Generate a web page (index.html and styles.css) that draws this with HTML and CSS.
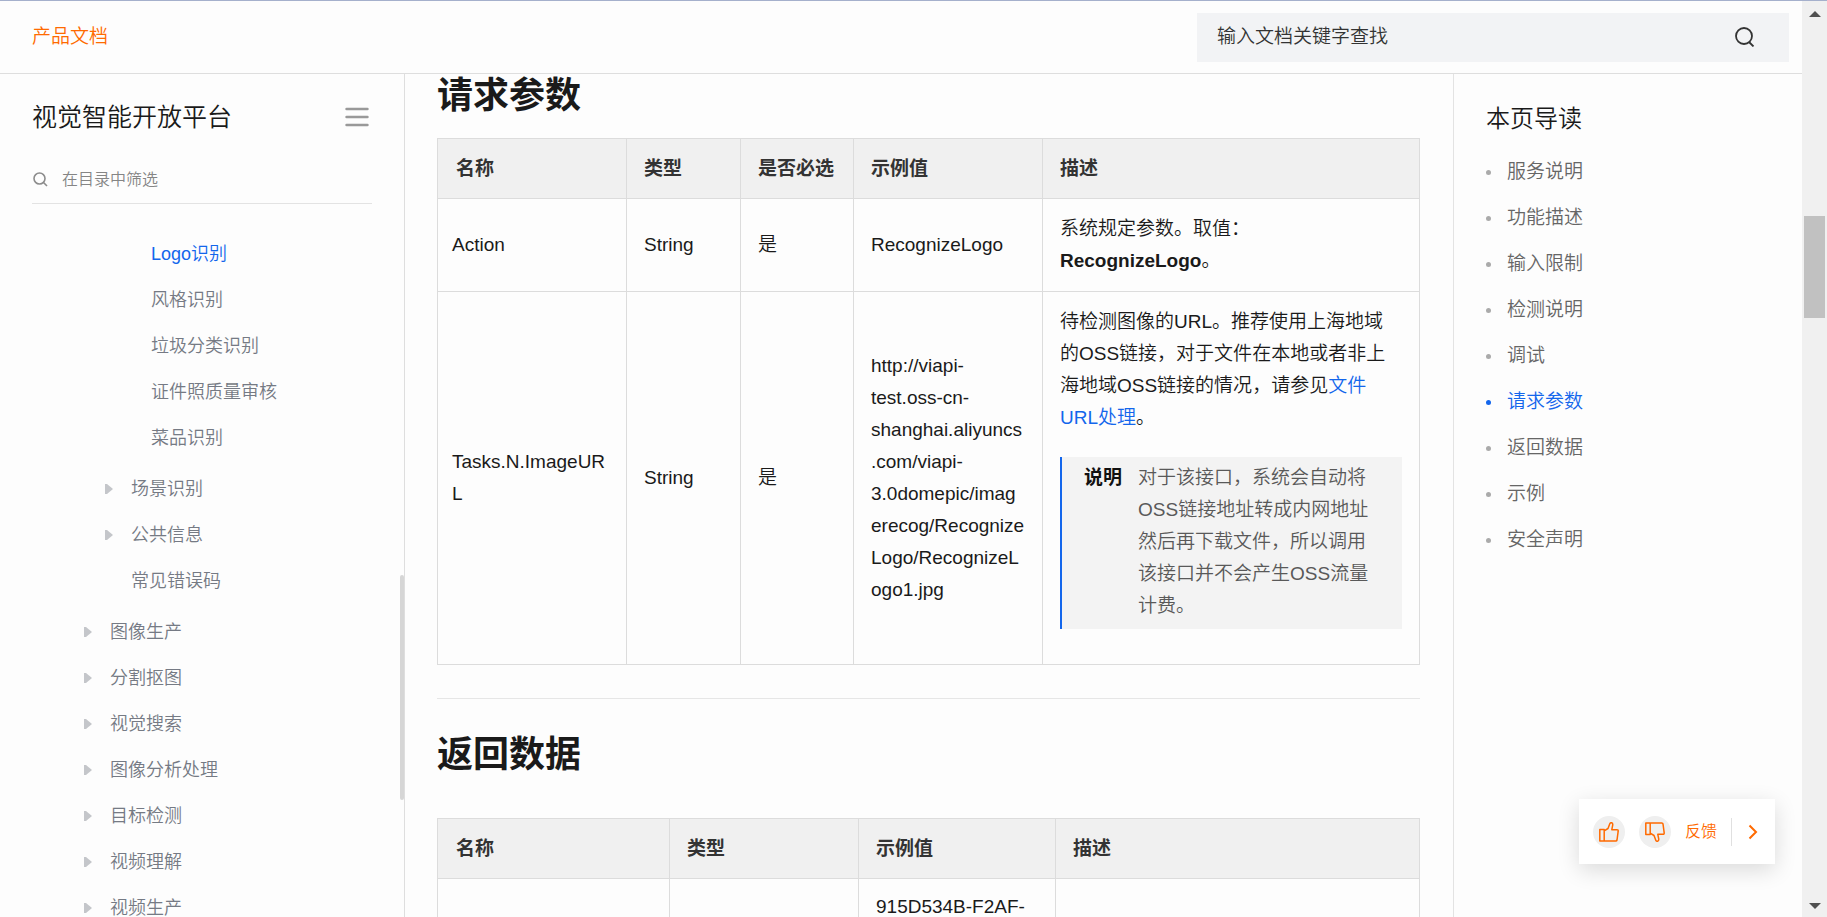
FILE: index.html
```html
<!DOCTYPE html>
<html lang="zh-CN">
<head>
<meta charset="utf-8">
<title>Logo识别 - 视觉智能开放平台</title>
<link rel="stylesheet" href="styles.css">
</head>
<body>
<div class="window">
  <div class="page">
    <header class="topbar">
      <a class="brand" href="#">产品文档</a>
      <form class="doc-search">
        <input class="doc-search-input" type="search" placeholder="输入文档关键字查找" aria-label="输入文档关键字查找">
        <button class="icon-button" type="button" aria-label="搜索">
          <svg width="20" height="20" viewBox="0 0 20 20" fill="none" stroke="#333" stroke-width="1.800"><circle cx="9" cy="9" r="8"/><path d="M14 15l4.500 4.500"/></svg>
        </button>
      </form>
    </header>
    <div class="columns">
      <aside class="sidebar">
        <div class="sidebar-head">
          <h2 class="sidebar-title">视觉智能开放平台</h2>
          <button class="icon-button" type="button" aria-label="收起目录">
            <svg width="24" height="20" viewBox="0 0 24 20" stroke="#999" stroke-width="2.400" stroke-linecap="round"><path d="M1.500 2h21M1.500 10h21M1.500 18h21"/></svg>
          </button>
        </div>
        <label class="filter">
          <svg width="15" height="15" viewBox="0 0 15 15" fill="none" stroke="#8c8c8c" stroke-width="1.6"><circle cx="6.500" cy="6.500" r="5.500"/><path d="M10.500 10.500l3.500 3.500"/></svg>
          <input class="filter-input" type="text" placeholder="在目录中筛选">
        </label>
        <nav class="tree">
          <ul class="tree-group level-3">
            <li><a class="active" href="#">Logo识别</a></li>
            <li><a href="#">风格识别</a></li>
            <li><a href="#">垃圾分类识别</a></li>
            <li><a href="#">证件照质量审核</a></li>
            <li><a href="#">菜品识别</a></li>
          </ul>
          <ul class="tree-group level-2">
            <li class="branch"><a href="#">场景识别</a></li>
            <li class="branch"><a href="#">公共信息</a></li>
            <li><a href="#">常见错误码</a></li>
          </ul>
          <ul class="tree-group level-1">
            <li class="branch"><a href="#">图像生产</a></li>
            <li class="branch"><a href="#">分割抠图</a></li>
            <li class="branch"><a href="#">视觉搜索</a></li>
            <li class="branch"><a href="#">图像分析处理</a></li>
            <li class="branch"><a href="#">目标检测</a></li>
            <li class="branch"><a href="#">视频理解</a></li>
            <li class="branch"><a href="#">视频生产</a></li>
          </ul>
        </nav>
        <div class="sidebar-thumb"></div>
      </aside>
      <main class="article">
        <section class="section">
          <h1 class="heading">请求参数</h1>
          <table class="params request">
            <colgroup><col class="c-name"><col class="c-type"><col class="c-need"><col class="c-example"><col></colgroup>
            <thead>
              <tr><th>名称</th><th>类型</th><th>是否必选</th><th>示例值</th><th>描述</th></tr>
            </thead>
            <tbody>
              <tr>
                <td>Action</td><td>String</td><td>是</td><td>RecognizeLogo</td>
                <td><p class="desc">系统规定参数。取值：<br><strong>RecognizeLogo</strong>。</p></td>
              </tr>
              <tr>
                <td>Tasks.N.ImageURL</td><td>String</td><td>是</td>
                <td class="example">http://viapi-<wbr>test.oss-cn-<wbr>shanghai.aliyuncs<wbr>.com/viapi-<wbr>3.0domepic/imag<wbr>erecog/Recognize<wbr>Logo/RecognizeL<wbr>ogo1.jpg</td>
                <td>
                  <p class="desc">待检测图像的URL。推荐使用上海地域的OSS链接，对于文件在本地或者非上海地域OSS链接的情况，请参见<a class="link" href="#">文件URL处理</a>。</p>
                  <div class="note">
                    <strong class="note-label">说明</strong>
                    <p class="note-text">对于该接口，系统会自动将OSS链接地址转成内网地址然后再下载文件，所以调用该接口并不会产生OSS流量计费。</p>
                  </div>
                </td>
              </tr>
            </tbody>
          </table>
        </section>
        <section class="section next">
          <h1 class="heading">返回数据</h1>
          <table class="params response">
            <colgroup><col class="r-name"><col class="r-type"><col class="r-example"><col></colgroup>
            <thead>
              <tr><th>名称</th><th>类型</th><th>示例值</th><th>描述</th></tr>
            </thead>
            <tbody>
              <tr><td></td><td></td><td>915D534B-F2AF-</td><td></td></tr>
            </tbody>
          </table>
        </section>
      </main>
      <aside class="toc">
        <h2 class="toc-title">本页导读</h2>
        <ul class="toc-list">
          <li><a href="#">服务说明</a></li>
          <li><a href="#">功能描述</a></li>
          <li><a href="#">输入限制</a></li>
          <li><a href="#">检测说明</a></li>
          <li><a href="#">调试</a></li>
          <li><a class="active" href="#">请求参数</a></li>
          <li><a href="#">返回数据</a></li>
          <li><a href="#">示例</a></li>
          <li><a href="#">安全声明</a></li>
        </ul>
      </aside>
    </div>
    <div class="feedback">
      <button class="round" type="button" aria-label="赞">
        <svg width="20" height="20" viewBox="0 0 20 20" fill="none" stroke="#ff6a00" stroke-width="1.5" stroke-linejoin="round"><path d="M.8 7.500h4.400v11.500H.8zM5.200 19h11.600q1 0 1.200-1l1.200-8.800q.1-1.500-1.200-1.500h-5.200l1-5q0-2-1.600-2-1 0-1.400 1L9 6.500 5.200 8.800"/></svg>
      </button>
      <button class="round" type="button" aria-label="踩">
        <svg width="20" height="20" viewBox="0 0 20 20" fill="none" stroke="#ff6a00" stroke-width="1.500" stroke-linejoin="round"><path d="M.8 12.500h4.400V1H.8zM5.200 1h11.600q1 0 1.200 1l1.200 8.800q.1 1.500-1.200 1.500h-5.200l1 5q0 2-1.600 2-1 0-1.400-1L9 13.500 5.200 11.200"/></svg>
      </button>
      <button class="feedback-link" type="button">反馈</button>
      <button class="collapse" type="button" aria-label="收起">
        <svg width="10" height="16" viewBox="0 0 10 16" fill="none" stroke="#ff6a00" stroke-width="2"><path d="M1.500 1.500L8 8l-6.500 6.500"/></svg>
      </button>
    </div>
  </div>
  <div class="scrollbar">
    <svg class="arrow" width="12" height="6" viewBox="0 0 12 6" fill="#505050"><path d="M6 0l6 6H0z"/></svg>
    <div class="track"><div class="thumb"></div></div>
    <svg class="arrow" width="12" height="6" viewBox="0 0 12 6" fill="#505050"><path d="M0 0h12L6 6z"/></svg>
  </div>
</div>
</body>
</html>
```

FILE: styles.css
```css
* { box-sizing: border-box; }

body {
  margin: 0;
  background: #fdfdfd;
  color: #1a1a1a;
  font: 350 19px/32px "Liberation Sans", "Noto Sans CJK SC", sans-serif;
}

a { color: inherit; text-decoration: none; }
h1, h2, p, ul { margin: 0; padding: 0; }
ul { list-style: none; }
strong { font-weight: 700; }
button {
  border: 0;
  padding: 0;
  background: none;
  color: inherit;
  font: inherit;
}
input {
  border: 0;
  outline: 0;
  padding: 0;
  min-width: 0;
  flex: 1;
  background: none;
  font: inherit;
}
svg { display: block; flex: none; }

.window {
  display: flex;
  height: 100vh;
  overflow: hidden;
  border-top: 1px solid #a5b0cc;
}
.page {
  position: relative;
  display: flex;
  flex: 1;
  flex-direction: column;
  min-width: 0;
}

/* Top bar */
.topbar {
  display: flex;
  flex: none;
  align-items: center;
  justify-content: space-between;
  height: 73px;
  padding: 0 13px 0 32px;
  border-bottom: 1px solid #dedede;
}
.brand { color: #ff6a00; }
.doc-search {
  display: flex;
  align-items: center;
  width: 592px;
  height: 49px;
  padding: 0 34px 0 20px;
  background: #f2f3f5;
}
.doc-search-input::placeholder { color: #333; opacity: 1; }

.columns { display: flex; flex: 1; min-height: 0; }

/* Directory tree */
.sidebar {
  position: relative;
  flex: none;
  width: 405px;
  padding: 25px 32px 0;
  overflow: hidden;
  border-right: 1px solid #dedede;
  color: #757a84;
}
.sidebar-head {
  display: flex;
  align-items: center;
  justify-content: space-between;
  padding-right: 3px;
}
.sidebar-title, .toc-title {
  color: #1a1a1a;
  font-size: 25px;
  font-weight: 350;
  line-height: 36px;
}
.filter {
  display: flex;
  align-items: center;
  gap: 14px;
  height: 48px;
  margin-top: 21px;
  padding-left: 1px;
  border-bottom: 1px solid #e3e3e3;
  font-size: 16px;
}
.filter-input::placeholder { color: #858585; opacity: 1; }
.tree { padding-top: 27px; font-size: 18px; line-height: 46px; }
.tree-group + .tree-group { margin-top: 5px; }
.tree-group li { display: flex; align-items: center; }
.level-3 { padding-left: 119px; }
.level-2 { padding-left: 99px; }
.level-1 { padding-left: 78px; }
.branch::before {
  width: 8px;
  height: 10px;
  margin: 0 18px 0 -26px;
  background: #c4c6ca;
  clip-path: polygon(0 0, 25% 0, 100% 50%, 25% 100%, 0 100%);
  content: "";
}
.tree .active, .toc .active { color: #1366ec; }
.sidebar-thumb {
  position: absolute;
  top: 501px;
  right: 0;
  width: 4px;
  height: 225px;
  border-radius: 2px;
  background: #d6d6d6;
}

/* Article */
.article {
  flex: 1;
  min-width: 0;
  padding: 0 33px 0 32px;
  overflow: hidden;
}
.heading {
  color: #1a1a1a;
  font-size: 36px;
  font-weight: 700;
  line-height: 44px;
}
.section .heading { margin-bottom: 20px; }
.section.next {
  margin-top: 33px;
  padding-top: 34px;
  border-top: 1px solid #e6e6e6;
}
.section.next .heading { margin-bottom: 41px; }
.params {
  width: 100%;
  border-collapse: collapse;
  table-layout: fixed;
}
.params th, .params td {
  padding: 14px 17px;
  border: 1px solid #dcdcdc;
  text-align: left;
  overflow-wrap: anywhere;
}
.params th {
  height: 60px;
  padding: 14px 17px 13px;
  background: #f0f0f0;
  color: #333;
  font-weight: 700;
}
.params th:first-child { padding-left: 18px; }
.params td:first-child { padding-left: 14px; }
.params .example { padding-right: 14px; }
.response td { padding-top: 12px; }
.c-name, .c-example { width: 189px; }
.c-type { width: 114px; }
.c-need { width: 113px; }
.r-name { width: 232px; }
.r-type { width: 189px; }
.r-example { width: 197px; }
.desc { padding-right: 8px; }
.link { color: #1366ec; }
.note {
  display: flex;
  gap: 16px;
  margin: 23px 0 21px;
  padding: 5px 24px 7px 22px;
  border-left: 2px solid #1366ec;
  background: #f3f3f3;
}
.note-label { flex: none; color: #111; }
.note-text { color: #595959; }

/* In-page contents */
.toc {
  flex: none;
  width: 349px;
  padding: 27px 32px 0;
  border-left: 1px solid #e3e3e3;
  color: #666;
}
.toc-title { font-size: 24px; }
.toc-list { padding-top: 12px; line-height: 46px; }
.toc-list a { display: flex; align-items: center; gap: 16px; }
.toc-list a::before {
  width: 5px;
  height: 5px;
  border-radius: 50%;
  background: #aaa;
  content: "";
}
.toc-list .active::before { background: #1366ec; }

/* Floating feedback card */
.feedback {
  position: absolute;
  right: 27px;
  bottom: 53px;
  display: flex;
  align-items: center;
  height: 65px;
  padding: 0 17px 0 14px;
  background: #fff;
  box-shadow: 0 6px 22px rgba(0, 0, 0, .14);
  color: #ff6a00;
  font-size: 16px;
}
.round {
  display: grid;
  place-items: center;
  width: 32px;
  height: 32px;
  margin-right: 14px;
  border-radius: 50%;
  background: #efefef;
}
.feedback-link { margin-right: 14px; }
.collapse {
  padding: 6px 0 6px 16px;
  border-left: 1px solid #e0e0e0;
}

/* Window scroll bar */
.scrollbar {
  display: flex;
  flex: none;
  flex-direction: column;
  align-items: center;
  width: 25px;
  padding: 10px 0 8px;
  background: #f0f0f0;
}
.track { flex: 1; width: 21px; padding-top: 199px; }
.thumb { height: 102px; background: #c1c1c1; }
```
